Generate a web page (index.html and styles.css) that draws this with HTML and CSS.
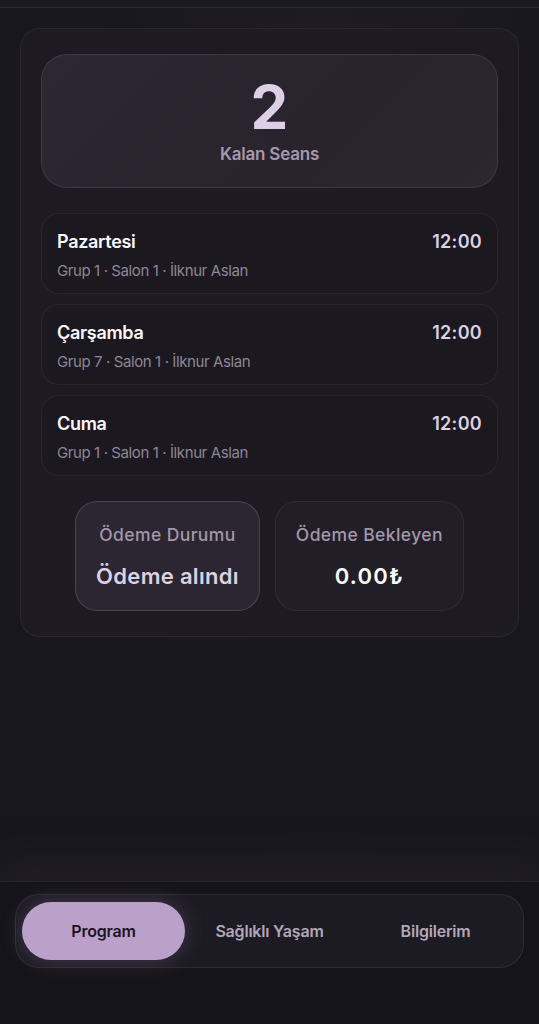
FILE: index.html
```html
<!DOCTYPE html>
<html lang="tr">
<head>
<meta charset="utf-8">
<title>Program</title>
<link rel="stylesheet" href="styles.css">
</head>
<body>
<div class="app">
  <header class="topbar"></header>
  <main class="main">
    <section class="panel">
      <div class="hero">
        <div class="hero-num">2</div>
        <div class="hero-label">Kalan Seans</div>
      </div>
      <div class="sessions">
        <div class="session">
          <div class="session-row">
            <span class="session-day">Pazartesi</span>
            <span class="session-time">12:00</span>
          </div>
          <div class="session-sub">Grup 1 · Salon 1 · İlknur Aslan</div>
        </div>
        <div class="session">
          <div class="session-row">
            <span class="session-day">Çarşamba</span>
            <span class="session-time">12:00</span>
          </div>
          <div class="session-sub">Grup 7 · Salon 1 · İlknur Aslan</div>
        </div>
        <div class="session">
          <div class="session-row">
            <span class="session-day">Cuma</span>
            <span class="session-time">12:00</span>
          </div>
          <div class="session-sub">Grup 1 · Salon 1 · İlknur Aslan</div>
        </div>
      </div>
      <div class="pay-row">
        <div class="pay pay-active">
          <div class="pay-label">Ödeme Durumu</div>
          <div class="pay-value">Ödeme alındı</div>
        </div>
        <div class="pay">
          <div class="pay-label">Ödeme Bekleyen</div>
          <div class="pay-value pay-white">0.00₺</div>
        </div>
      </div>
    </section>
  </main>
  <nav class="bottom">
    <div class="tabs">
      <div class="tab tab-active">Program</div>
      <div class="tab">Sağlıklı Yaşam</div>
      <div class="tab">Bilgilerim</div>
    </div>
  </nav>
</div>
</body>
</html>
```
FILE: styles.css
```css
* { box-sizing: border-box; }
html, body { margin: 0; padding: 0; }
body {
  background: #19171e;
  font-family: "Inter", "Noto Sans", sans-serif;
  color: #fff;
}
.app {
  height: 100vh;
  display: flex;
  flex-direction: column;
  background: radial-gradient(ellipse at 60% 0%, #1e1b22 0%, #19171e 60%);
}
.topbar {
  height: 8px;
  background: #1c1a21;
  border-bottom: 1px solid rgba(255,255,255,0.07);
  flex: none;
}
.main {
  flex: 1;
  padding: 20px 20px 0;
}
.panel {
  background: #1d1a23;
  border: 1px solid rgba(255,255,255,0.06);
  border-radius: 20px;
  padding: 25px 20px 25px;
}
.hero {
  height: 134px;
  border-radius: 26px;
  background: linear-gradient(135deg, #2c2732 0%, #28232d 60%, #2b2630 100%);
  border: 1px solid rgba(255,255,255,0.09);
  display: flex;
  flex-direction: column;
  align-items: center;
  justify-content: center;
}
.hero-num {
  font-size: 60px;
  font-weight: 700;
  line-height: 60px;
  color: #dccfe6;
  margin-top: -2px;
}
.hero-label {
  font-size: 17px;
  font-weight: 600;
  color: #a698ac;
  margin-top: 7px;
  letter-spacing: -0.2px;
}
.sessions {
  margin-top: 25px;
  display: flex;
  flex-direction: column;
  gap: 10px;
}
.session {
  height: 81px;
  border-radius: 18px;
  background: #1b1820;
  border: 1px solid rgba(255,255,255,0.06);
  padding: 17px 15px 0 15px;
}
.session-row {
  display: flex;
  justify-content: space-between;
  align-items: center;
}
.session-day {
  font-size: 18px;
  font-weight: 600;
  color: #fbf9fc;
  letter-spacing: -0.3px;
}
.session-time {
  font-size: 18px;
  font-weight: 600;
  color: #dcd1e3;
  letter-spacing: 0.3px;
}
.session-sub {
  margin-top: 9px;
  font-size: 15px;
  color: #8e8794;
  letter-spacing: -0.4px;
}
.pay-row {
  margin-top: 25px;
  display: flex;
  justify-content: center;
  gap: 15px;
}
.pay {
  height: 110px;
  border-radius: 22px;
  background: #221e28;
  border: 1px solid rgba(255,255,255,0.07);
  padding: 0 20px;
  display: flex;
  flex-direction: column;
  align-items: center;
  justify-content: center;
}
.pay-active {
  background: #2b2632;
  border-color: rgba(255,255,255,0.14);
}
.pay-label {
  font-size: 17.5px;
  font-weight: 500;
  color: #a497a8;
  letter-spacing: 0.4px;
}
.pay-value {
  margin-top: 18px;
  font-size: 22px;
  font-weight: 600;
  color: #ddd1e5;
  letter-spacing: 0.3px;
}
.pay-white { color: #fff; letter-spacing: 1.2px; }
.bottom {
  flex: none;
  height: 143px;
  background: #16141b;
  border-top: 1px solid rgba(255,255,255,0.08);
  box-shadow: 0 -20px 30px rgba(40,36,46,0.5);
  padding: 12px 15px 0;
}
.tabs {
  height: 74px;
  border-radius: 24px;
  background: #1c1a23;
  border: 1px solid rgba(255,255,255,0.08);
  padding: 7px 6px;
  display: grid;
  grid-template-columns: repeat(3, 1fr);
  gap: 3px;
}
.tab {
  display: flex;
  align-items: center;
  justify-content: center;
  border-radius: 30px;
  font-size: 16px;
  font-weight: 600;
  color: #b3a8b9;
  letter-spacing: -0.2px;
}
.tab-active {
  background: #bba1ca;
  color: #1d1425;
  box-shadow: 0 0 22px rgba(187,161,202,0.25);
}
```
